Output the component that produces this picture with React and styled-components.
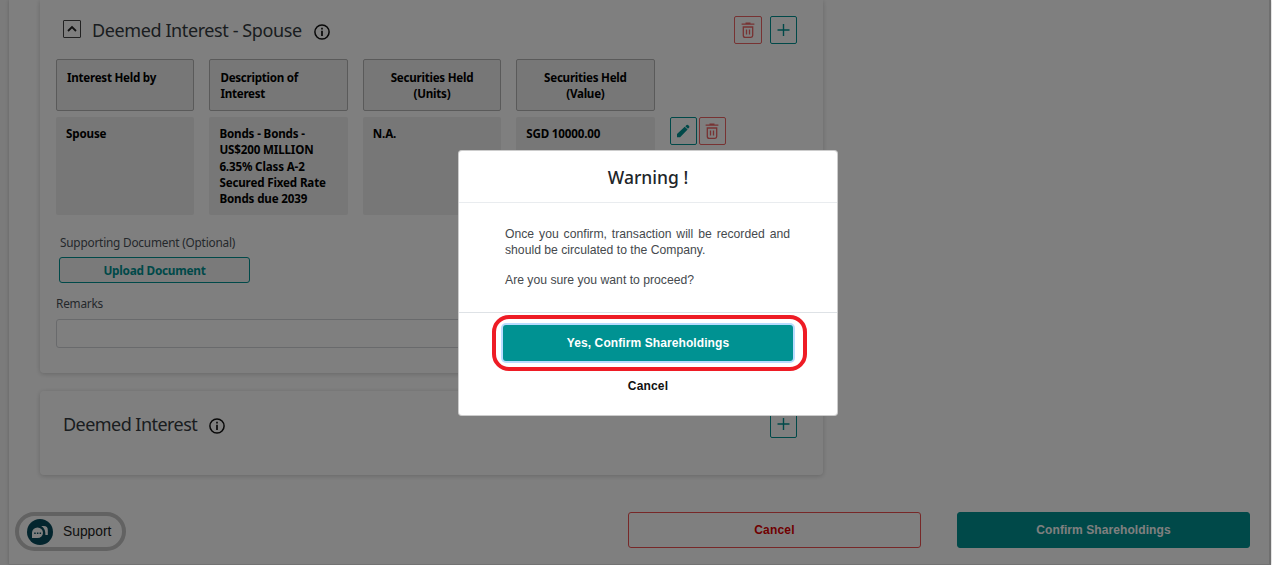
import styled, { createGlobalStyle } from 'styled-components';

const GlobalStyle = createGlobalStyle`
    * {
        box-sizing: border-box;
    }
    body {
        margin: 0;
        overflow: hidden;
        font-family: 'Noto Sans', 'Open Sans', sans-serif;
        color: #212529;
    }
    button, input {
        font-family: inherit;
        margin: 0;
        padding: 0;
    }
`;

const Page = styled.div`
    display: flex;
    height: 565px;
    padding: 0 1px 0 9px;
    background: #f7f7f7;
`;

const Main = styled.main`
    flex: 1;
    display: flex;
    flex-direction: column;
    padding: 0 19px 0 31px;
    background: #fff;
    border-right: 2px solid #dedede;
    border-bottom: 1px solid #e4e4e4;
    box-shadow: 0 0 4px rgba(0, 0, 0, .2);
`;

const Card = styled.section`
    width: 783px;
    height: ${props => props.$height}px;
    margin-bottom: ${props => props.$gap}px;
    padding: ${props => props.$padding};
    border-radius: ${props => props.$open ? '0 0 4px 4px' : '4px'};
    box-shadow: 0 1px 5px rgba(0, 0, 0, .2);
`;

const CardHeader = styled.div`
    display: flex;
    align-items: center;
    height: 28px;
    padding: 0 10px 0 7px;
`;

const Toggle = styled.button`
    display: flex;
    align-items: center;
    justify-content: center;
    width: 18px;
    height: 18px;
    margin: -3px 11px 0 0;
    background: transparent;
    border: 1px solid #444;
    border-radius: 1px;
`;

const Title = styled.h2`
    margin: 0;
    width: ${props => props.$width}px;
    font-size: 18px;
    font-weight: 400;
    line-height: 28px;
    letter-spacing: ${props => props.$spacing || 0}px;
    white-space: nowrap;
    color: #343a40;
`;

const Info = styled.span`
    display: flex;
    margin: 3px 0 0 12px;
`;

const Actions = styled.div`
    display: flex;
    gap: ${props => props.$gap}px;
    margin-left: ${props => props.$push ? 'auto' : 0};
`;

const IconButton = styled.button`
    display: flex;
    align-items: center;
    justify-content: center;
    width: ${props => props.$width || 27}px;
    height: 28px;
    background: transparent;
    border: 1px solid ${props => props.$danger ? '#ee6464' : '#009292'};
    border-radius: 2px;
    color: ${props => props.$danger ? '#ee6464' : '#009292'};
`;

const Table = styled.div`
    display: grid;
    grid-template-columns: repeat(4, 138.4px) auto;
    column-gap: 15px;
    row-gap: 6px;
    margin-top: 15px;
`;

const Cell = styled.div`
    height: ${props => props.$head ? 52 : 98}px;
    padding: ${props => props.$head ? '10px 10px 0 10px' : '9px 10px'};
    background: #eee;
    border: ${props => props.$head ? '1px solid #b4b4b4' : 'none'};
    border-radius: 2px;
    font-size: 11.6px;
    font-weight: 700;
    line-height: 16.3px;
    letter-spacing: ${props => props.$head ? -.25 : -.15}px;
    text-align: ${props => props.$center ? 'center' : 'left'};
    white-space: pre-line;
    color: #000;
`;

const Label = styled.label`
    display: block;
    margin: ${props => props.$margin};
    font-size: 11.8px;
    line-height: 16px;
    letter-spacing: -.2px;
    color: #495057;
`;

const UploadButton = styled.button`
    display: block;
    width: 191px;
    height: 26px;
    margin-left: 3px;
    background: #f4f4f4;
    border: 1px solid #009292;
    border-radius: 3px;
    font-size: 11.8px;
    font-weight: 700;
    letter-spacing: -.25px;
    color: #009292;
`;

const RemarksInput = styled.input`
    display: block;
    width: 742px;
    height: 29px;
    background: #fff;
    border: 1px solid #d3d5d8;
    border-radius: 3px;
`;

const Footer = styled.footer`
    display: flex;
    justify-content: space-between;
    margin-left: -25px;
`;

const Support = styled.button`
    display: flex;
    align-items: center;
    gap: 10px;
    width: 111px;
    height: 39px;
    padding-left: 8px;
    background: #fff;
    border: 4px solid #c4c4c4;
    border-radius: 20px;
    font-family: 'Liberation Sans', Arial, sans-serif;
    font-size: 13.8px;
    color: #222;
`;

const FooterButton = styled.button`
    width: 293px;
    height: 36px;
    background: ${props => props.$primary ? '#009292' : 'transparent'};
    border: 1px solid ${props => props.$primary ? '#009292' : '#ee5050'};
    border-radius: 3px;
    font-family: 'Liberation Sans', Arial, sans-serif;
    font-size: 12px;
    font-weight: 700;
    line-height: 16px;
    letter-spacing: ${props => props.$primary ? .08 : .2}px;
    color: ${props => props.$primary ? '#fff' : '#e00000'};
`;

const Backdrop = styled.div`
    position: absolute;
    top: 0;
    left: 0;
    width: 1271px;
    height: 565px;
    padding: 150px 0 0 458px;
    background: rgba(0, 0, 0, .5);
`;

const Modal = styled.div`
    width: 380px;
    height: 266px;
    padding: 1px;
    background: #fff;
    border-radius: 4px;
    box-shadow: inset 0 0 0 1px rgba(0, 0, 0, .2);
    font-family: 'Liberation Sans', Arial, sans-serif;
`;

const ModalTitle = styled.h3`
    margin: 0;
    height: 52px;
    border-bottom: 1px solid #e9ecef;
    font-family: 'Noto Sans', 'Open Sans', sans-serif;
    font-size: 17.5px;
    font-weight: 500;
    line-height: 52px;
    text-align: center;
    color: #212529;
`;

const ModalBody = styled.div`
    height: 109px;
    padding: 23px 47px 0 46px;
    font-size: 12.2px;
    line-height: 16px;
    color: #45494d;
    p {
        margin: 0 0 14px;
        text-align: justify;
    }
`;

const ModalFooter = styled.div`
    display: flex;
    flex-direction: column;
    align-items: center;
    padding-top: 12px;
    border-top: 1px solid #dee2e6;
`;

const ConfirmButton = styled.button`
    position: relative;
    width: 290px;
    height: 36px;
    background: #009292;
    border: none;
    border-radius: 3px;
    box-shadow: 0 0 0 2px #b9dcff;
    font-size: 12px;
    font-weight: 700;
    letter-spacing: .09px;
    color: #fff;
    &::after {
        content: '';
        position: absolute;
        inset: -10px -14px -10px -11px;
        border: 4px solid #ee1c25;
        border-radius: 17px;
    }
`;

const CancelLink = styled.button`
    margin-top: 17px;
    background: none;
    border: none;
    font-size: 12px;
    font-weight: 700;
    line-height: 16px;
    letter-spacing: .15px;
    color: #111;
`;

const headers = [
    { text: 'Interest Held by' },
    { text: 'Description of\nInterest' },
    { text: 'Securities Held\n(Units)', center: true },
    { text: 'Securities Held\n(Value)', center: true },
];

const values = [
    'Spouse',
    'Bonds - Bonds -\nUS$200 MILLION\n6.35% Class A-2\nSecured Fixed Rate\nBonds due 2039',
    'N.A.',
    'SGD 10000.00',
];

function ChevronIcon() {
    return (
        <svg width="16" height="16" viewBox="0 0 16 16" fill="none" stroke="#222" strokeWidth="1.8">
            <path d="M4 10l4-4 4 4" />
        </svg>
    );
}

function InfoIcon() {
    return (
        <svg width="16" height="16" viewBox="0 0 16 16" fill="none" stroke="#111">
            <circle cx="8" cy="8" r="7.1" strokeWidth="1.5" />
            <path d="M8 6.7v5.2M8 3.8v1.7" strokeWidth="1.7" />
        </svg>
    );
}

function TrashIcon() {
    return (
        <svg width="14" height="18" viewBox="0 0 14 18" fill="none" stroke="currentColor">
            <path d="M.6 3.2h12.8M4.5 2.2h5" strokeWidth="1.3" />
            <path d="M2.3 6h9.4v8.6q0 1.8-1.8 1.8H4.1q-1.8 0-1.8-1.8z" strokeWidth="1.3" />
            <path d="M5.5 8.5v5M8.5 8.5v5" strokeWidth="1.3" />
        </svg>
    );
}

function PlusIcon() {
    return (
        <svg width="13" height="14" viewBox="0 0 13 14" fill="none" stroke="currentColor" strokeWidth="1.4">
            <path d="M6.5 1v12M.5 7h12" />
        </svg>
    );
}

function PencilIcon() {
    return (
        <svg width="14" height="14" viewBox="0 0 14 14" fill="currentColor">
            <path d="M1 13.2v-3.1L8.7 2.7l2.9 2.8-7.5 7.7zM9.3 2.2l1.3-1.3q.7-.5 1.4.1l1.1 1.1q.6.7.1 1.4L12 4.8z" />
        </svg>
    );
}

function ChatIcon() {
    return (
        <svg width="26" height="26" viewBox="0 0 26 26">
            <circle cx="13" cy="13" r="13" fill="#064a5c" />
            <path d="M5 19v-5.2A5.5 5.2 0 1 1 10.5 19z" fill="#fff" />
            <path d="M14.2 7h2.6q4 0 4 4v5h-2.4q.3-6.2-4.2-9z" fill="#fff" />
            <path d="M7.2 14.2h1.5M9.9 14.2h1.5M12.6 14.2h1.5" stroke="#064a5c" strokeWidth="1.4" />
        </svg>
    );
}

function SpouseCard() {
    return (
        <Card $open $height={373} $gap={18} $padding="16px 16px 0">
            <CardHeader>
                <Toggle><ChevronIcon /></Toggle>
                <Title $width={210} $spacing={-.4}>Deemed Interest - Spouse</Title>
                <Info><InfoIcon /></Info>
                <Actions $push $gap={8}>
                    <IconButton $danger $width={28}><TrashIcon /></IconButton>
                    <IconButton><PlusIcon /></IconButton>
                </Actions>
            </CardHeader>
            <Table>
                {headers.map(h => <Cell $head key={h.text} $center={h.center}>{h.text}</Cell>)}
                <span />
                {values.map(value => <Cell key={value}>{value}</Cell>)}
                <Actions $gap={2}>
                    <IconButton><PencilIcon /></IconButton>
                    <IconButton $danger><TrashIcon /></IconButton>
                </Actions>
            </Table>
            <Label $margin="19px 0 7px 4px">Supporting Document (Optional)</Label>
            <UploadButton>Upload Document</UploadButton>
            <Label $margin="12px 0 8px">Remarks</Label>
            <RemarksInput />
        </Card>
    );
}

function App() {
    return (
        <>
            <GlobalStyle />
            <Page>
                <Main>
                    <SpouseCard />
                    <Card $height={84} $gap={37} $padding="19px 16px 0">
                        <CardHeader>
                            <Title $width={134} $spacing={-.55}>Deemed Interest</Title>
                            <Info><InfoIcon /></Info>
                            <Actions $push><IconButton><PlusIcon /></IconButton></Actions>
                        </CardHeader>
                    </Card>
                    <Footer>
                        <Support><ChatIcon />Support</Support>
                        <Actions $gap={36}>
                            <FooterButton>Cancel</FooterButton>
                            <FooterButton $primary>Confirm Shareholdings</FooterButton>
                        </Actions>
                    </Footer>
                </Main>
            </Page>
            <Backdrop>
                <Modal>
                    <ModalTitle>Warning !</ModalTitle>
                    <ModalBody>
                        <p>Once you confirm, transaction will be recorded and should be circulated to the Company.</p>
                        <p>Are you sure you want to proceed?</p>
                    </ModalBody>
                    <ModalFooter>
                        <ConfirmButton>Yes, Confirm Shareholdings</ConfirmButton>
                        <CancelLink>Cancel</CancelLink>
                    </ModalFooter>
                </Modal>
            </Backdrop>
        </>
    );
}

export default App;
